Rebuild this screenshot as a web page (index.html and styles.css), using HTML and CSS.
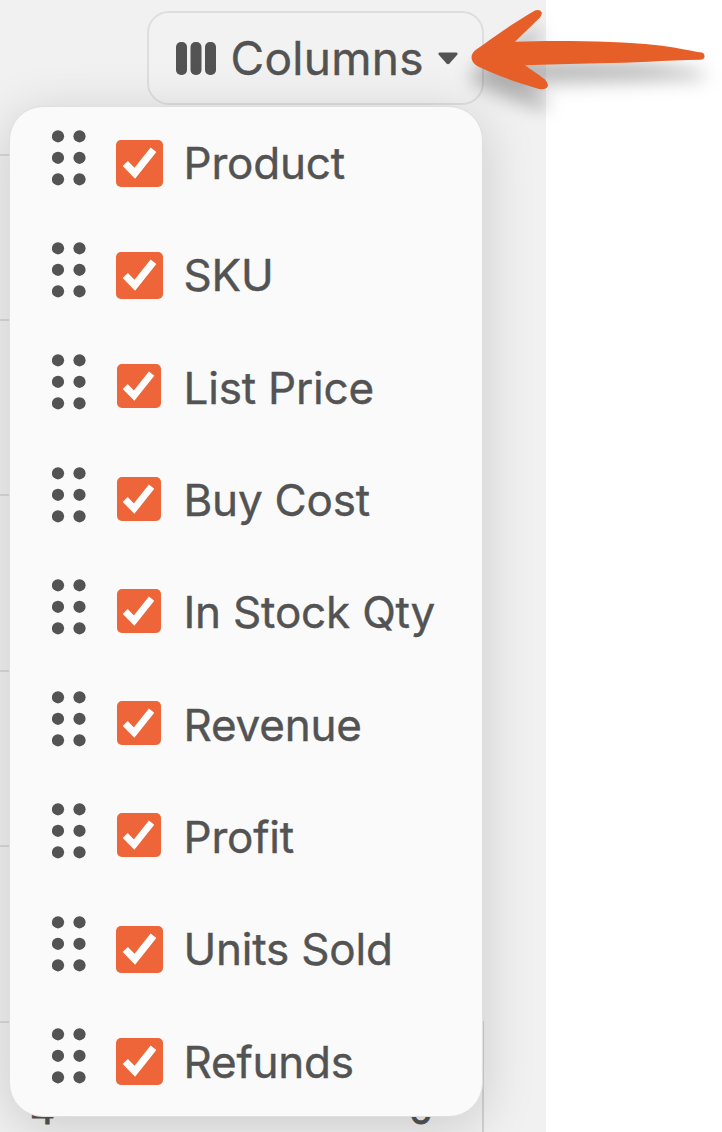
FILE: index.html
```html
<!DOCTYPE html>
<html lang="en">
<head>
<meta charset="utf-8">
<title>Columns</title>
<link rel="stylesheet" href="styles.css">
</head>
<body>
<svg class="symbols" aria-hidden="true">
  <symbol id="grip" viewBox="0 0 34 56">
    <circle cx="6" cy="6.3" r="6.1"/><circle cx="27.5" cy="6.3" r="6.1"/>
    <circle cx="6" cy="27.8" r="6.1"/><circle cx="27.5" cy="27.8" r="6.1"/>
    <circle cx="6" cy="49.3" r="6.1"/><circle cx="27.5" cy="49.3" r="6.1"/>
  </symbol>
  <symbol id="check" viewBox="0 0 47 47">
    <path d="M9.3 23.5 18.8 33.3 37.500 9.800" fill="none" stroke="#fff" stroke-width="7.300"/>
  </symbol>
</svg>
<main class="app">
  <header class="toolbar">
    <button class="columns-button">
      <svg class="bars" viewBox="0 0 40 33"><rect width="11" height="33" rx="5"/><rect x="14.5" width="11" height="33" rx="5"/><rect x="29" width="11" height="33" rx="5"/></svg>
      <span class="button-label">Columns</span>
      <svg class="caret" viewBox="0 0 20 13"><path d="M1.5.5H18.500Q20.500 1 19 3L11.500 11.500Q10 13 8.500 11.500L1 3Q-.5 1 1.500.5Z"/></svg>
    </button>
  </header>
  <section class="table">
    <div class="line first"></div>
    <div class="line"></div>
    <div class="line"></div>
    <div class="line"></div>
    <div class="line"></div>
    <div class="line last"><span>4</span><span>0</span></div>
  </section>
  <ul class="menu">
    <li class="item"><svg class="grip"><use href="#grip"/></svg><span class="box large"><svg><use href="#check"/></svg></span><span class="name">Product</span></li>
    <li class="item"><svg class="grip"><use href="#grip"/></svg><span class="box large"><svg><use href="#check"/></svg></span><span class="name">SKU</span></li>
    <li class="item"><svg class="grip"><use href="#grip"/></svg><span class="box"><svg><use href="#check"/></svg></span><span class="name">List Price</span></li>
    <li class="item"><svg class="grip"><use href="#grip"/></svg><span class="box"><svg><use href="#check"/></svg></span><span class="name">Buy Cost</span></li>
    <li class="item"><svg class="grip"><use href="#grip"/></svg><span class="box"><svg><use href="#check"/></svg></span><span class="name">In Stock Qty</span></li>
    <li class="item"><svg class="grip"><use href="#grip"/></svg><span class="box"><svg><use href="#check"/></svg></span><span class="name">Revenue</span></li>
    <li class="item"><svg class="grip"><use href="#grip"/></svg><span class="box"><svg><use href="#check"/></svg></span><span class="name">Profit</span></li>
    <li class="item"><svg class="grip"><use href="#grip"/></svg><span class="box large"><svg><use href="#check"/></svg></span><span class="name">Units Sold</span></li>
    <li class="item"><svg class="grip"><use href="#grip"/></svg><span class="box large"><svg><use href="#check"/></svg></span><span class="name">Refunds</span></li>
  </ul>
</main>
<svg class="arrow" viewBox="0 0 262 110">
  <path d="M17 49C33 38 53 23 75 10.500Q80 9 81.800 12.500Q82.200 15 80 17.500L55 41.800C100 40 160 41.500 195 45C214 47 231 51 242 52.600Q245 53.500 244.500 57Q244 59.800 240 59.800C205 60.500 170 63 140 63.300C110 63.600 87 65 65 65.200C72 70 79 75 85 79.500Q89 83.500 87.500 87Q85 90.300 79 89C59 83 39 76.500 18 66.500C9 61 10 53.500 17 49Z"/>
</svg>
</body>
</html>
```
FILE: styles.css
```css
* { box-sizing: border-box; }
body {
  margin: 0;
  width: 722px;
  height: 1132px;
  overflow: hidden;
  position: relative;
  background: #fff;
  color: #535353;
  font-family: Inter, "Liberation Sans", sans-serif;
}
.symbols { position: absolute; width: 0; height: 0; }
.app {
  position: relative;
  width: 545.5px;
  height: 1132px;
  overflow: hidden;
  background: #f1f1f1;
}
.toolbar {
  display: flex;
  justify-content: flex-end;
  padding: 11px 62px 0 0;
  height: 106px;
}
.columns-button {
  display: flex;
  align-items: center;
  width: 337px;
  height: 94px;
  padding: 0 0 0 27px;
  border: 2px solid #dedede;
  border-radius: 22px;
  background: #f2f2f2;
  color: inherit;
  font: 400 46px/60px Inter, "Liberation Sans", sans-serif;
  letter-spacing: .3px;
  -webkit-text-stroke: .4px #535353;
}
.bars { width: 40px; height: 33px; fill: #535353; }
.button-label { width: 193px; margin-left: 15px; text-align: left; white-space: nowrap; }
.caret { width: 20px; height: 13px; margin-left: 14px; fill: #535353; }
.table {
  width: 482px;
  height: 1026px;
  padding-top: 48px;
}
.line { height: 175.500px; border-top: 2px solid #d9d9d9; }
.first { height: 164.500px; }
.last {
  display: flex;
  justify-content: space-between;
  width: 484px;
  height: 111px;
  padding: 60px 49px 0 30px;
  border-right: 2px solid #d2d2d2;
  font-size: 39px;
  line-height: 54px;
  -webkit-text-stroke: .8px #535353;
}
.menu {
  position: absolute;
  left: 9px;
  top: 106px;
  width: 474px;
  height: 1010.500px;
  margin: 0;
  padding: 0 0 0 42px;
  list-style: none;
  background: #fafafa;
  border: 1px solid #dfdfdf;
  border-radius: 34px;
  box-shadow: 0 10px 54px rgba(0, 0, 0, .165);
}
.item { display: flex; align-items: center; height: 112.300px; }
.grip { width: 34px; height: 56px; margin: -11px 31px 0 -.5px; fill: #535353; }
.box {
  flex: none;
  display: flex;
  width: 44px;
  height: 44px;
  margin: -3px 23px 0 0;
  border-radius: 5px;
  background: #ed6538;
}
.box.large { width: 47px; height: 47px; margin: 0 21px 0 -1px; }
.box svg { width: 100%; height: 100%; }
.box:not(.large) svg { transform: translate(-.5px, .5px); }
.name {
  font-size: 44px;
  line-height: 60px;
  letter-spacing: -.2px;
  white-space: nowrap;
  -webkit-text-stroke: .4px #535353;
}
.arrow {
  position: absolute;
  left: 460px;
  top: 0;
  width: 262px;
  height: 110px;
  overflow: visible;
  fill: #e65f29;
  filter: drop-shadow(0 19px 9px rgba(0, 0, 0, .27));
}
```
